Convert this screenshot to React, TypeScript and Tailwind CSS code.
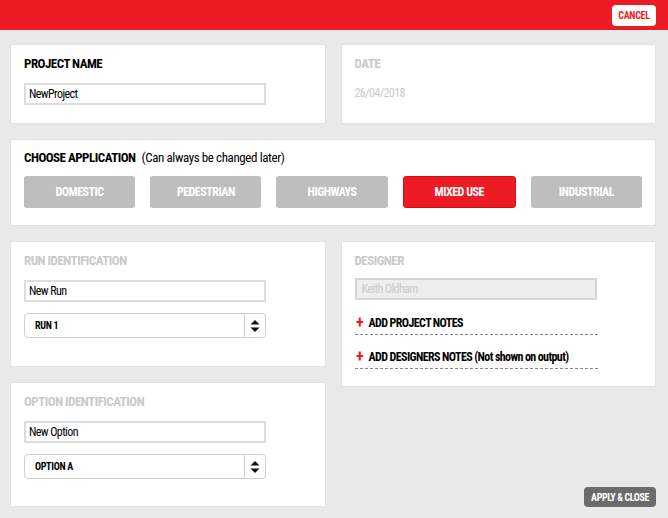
const applications = ["DOMESTIC", "PEDESTRIAN", "HIGHWAYS", "MIXED USE", "INDUSTRIAL"];

const Card = ({ className = "", children }: { className?: string; children: React.ReactNode }) => (
  <section className={`bg-white border border-[#e2e2e2] px-[13px] ${className}`}>{children}</section>
);

const Title = ({ muted, children }: { muted?: boolean; children: React.ReactNode }) => (
  <h2 className={`text-[13px] leading-[14px] font-bold tracking-[-0.5px] ${muted ? "text-[#c9c9c9]" : "text-black"}`}>
    {children}
  </h2>
);

const TextInput = ({ value }: { value: string }) => (
  <div className="h-[22px] w-[242px] border-2 border-[#dcdcdc] flex items-center px-[3px] text-[12px] leading-[14px] tracking-[-0.6px] text-black">
    {value}
  </div>
);

const SelectBox = ({ value }: { value: string }) => (
  <div className="h-[25px] w-[242px] border border-[#cfcfcf] rounded-[4px] flex items-center text-[10px] leading-[12px] font-bold tracking-[-0.3px] text-black">
    <span className="flex-1 pl-[10px]">{value}</span>
    <span className="h-full w-[21px] border-l border-[#cfcfcf] flex items-center justify-center">
      <svg width="10" height="14" viewBox="0 0 10 14">
        <path d="M5 1 L9.5 5.5 H0.5 Z" fill="#111" />
        <path d="M5 13 L9.5 8.5 H0.5 Z" fill="#111" />
      </svg>
    </span>
  </div>
);

const NoteLink = ({ children }: { children: React.ReactNode }) => (
  <button
    type="button"
    className="w-[243px] flex items-center gap-[4px] pb-[4px] border-b border-dashed border-[#8a8a8a] text-[12px] leading-[14px] font-bold tracking-[-0.6px] text-black text-left whitespace-nowrap"
  >
    <span className="text-[#ed1c24] text-[16px] leading-[12px] w-[10px] text-center">+</span>
    <span>{children}</span>
  </button>
);

export default function App() {
  return (
    <div className="min-h-[518px] bg-[#e9e9e9] font-['Roboto',sans-serif] font-stretch-condensed">
      <header className="h-[30px] bg-[#ed1c24] flex items-center justify-end pr-[12px]">
        <button
          type="button"
          className="h-[21px] w-[44px] bg-white rounded-[4px] text-[#ed1c24] text-[10px] font-bold tracking-[-0.3px]"
        >
          CANCEL
        </button>
      </header>

      <main className="pl-[10px] pr-[12px] pt-[14px] flex flex-col gap-[15px]">
        <div className="grid grid-cols-2 gap-[15px]">
          <Card className="pt-[12px] pb-[18px]">
            <Title>PROJECT NAME</Title>
            <div className="mt-[12px]">
              <TextInput value="NewProject" />
            </div>
          </Card>
          <Card className="pt-[12px]">
            <Title muted>DATE</Title>
            <p className="mt-[15px] text-[12px] leading-[14px] tracking-[-0.6px] text-[#cbcbcb]">26/04/2018</p>
          </Card>
        </div>

        <Card className="pt-[11px] pb-[17px]">
          <div className="flex items-baseline gap-[6px] leading-[14px]">
            <Title>CHOOSE APPLICATION</Title>
            <span className="text-[13px] tracking-[-0.4px] text-black">(Can always be changed later)</span>
          </div>
          <div className="mt-[11px] flex gap-[15px]">
            {applications.map((name) => (
              <button
                key={name}
                type="button"
                className={
                  name === "MIXED USE"
                    ? "flex-1 h-[32px] rounded-[3px] bg-[#ed1c24] border border-[#d21219] text-white text-[12px] font-bold tracking-[-0.5px]"
                    : "flex-1 h-[32px] rounded-[3px] bg-[#bebebe] text-white text-[12px] font-bold tracking-[-0.5px]"
                }
              >
                {name}
              </button>
            ))}
          </div>
        </Card>

        <div className="grid grid-cols-2 gap-[15px]">
          <div className="flex flex-col gap-[15px]">
            <Card className="pt-[12px] pb-[28px]">
              <Title muted>RUN IDENTIFICATION</Title>
              <div className="mt-[12px]">
                <TextInput value="New Run" />
              </div>
              <div className="mt-[11px]">
                <SelectBox value="RUN 1" />
              </div>
            </Card>
            <Card className="pt-[12px] pb-[27px]">
              <Title muted>OPTION IDENTIFICATION</Title>
              <div className="mt-[12px]">
                <TextInput value="New Option" />
              </div>
              <div className="mt-[11px]">
                <SelectBox value="OPTION A" />
              </div>
            </Card>
          </div>

          <div className="flex flex-col">
            <Card className="pt-[12px] pb-[17px]">
              <Title muted>DESIGNER</Title>
              <div className="mt-[10px] h-[22px] w-[242px] border-2 border-[#d6d6d6] bg-[#eeeeee] flex items-center px-[5px] text-[12px] leading-[14px] tracking-[-0.6px] text-[#c9c9c9]">
                Keith Oldham
              </div>
              <div className="mt-[16px] flex flex-col gap-[15px]">
                <NoteLink>ADD PROJECT NOTES</NoteLink>
                <NoteLink>ADD DESIGNERS NOTES (Not shown on output)</NoteLink>
              </div>
            </Card>
            <button
              type="button"
              className="mt-auto self-end h-[20px] px-[7px] rounded-[4px] bg-[#6b6b6b] text-white text-[10px] font-bold tracking-[-0.4px]"
            >
              APPLY &amp; CLOSE
            </button>
          </div>
        </div>
      </main>
    </div>
  );
}
